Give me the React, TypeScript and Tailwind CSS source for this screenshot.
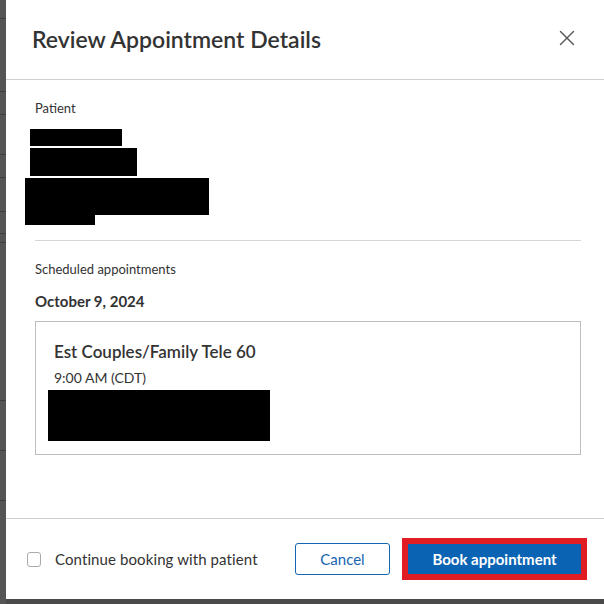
import { X } from "lucide-react";

const font = { fontFamily: "Lato, 'Noto Sans', sans-serif" };

function Redacted({ className }: { className: string }) {
  return <div className={`bg-black ${className}`} />;
}

export default function App() {
  return (
    <div className="w-[604px] h-[604px] bg-[#4a4a4a] flex overflow-hidden" style={font}>
      <div className="w-[6px] h-full bg-[#555] flex flex-col">
        <div className="h-[19px] border-b border-[#3f3f3f]" />
        <div className="h-[73px] border-b border-[#3f3f3f]" />
        <div className="h-[23px] border-b border-[#3f3f3f]" />
        <div className="h-[40px] border-b border-[#3f3f3f]" />
        <div className="h-[23px] border-b border-[#3f3f3f]" />
        <div className="h-[34px] border-b border-[#3f3f3f]" />
        <div className="h-[22px] border-b border-[#3f3f3f]" />
        <div className="h-[9px] border-b border-[#3f3f3f]" />
        <div className="h-[158px] border-b border-[#3f3f3f]" />
        <div className="h-[50px] border-b border-[#3f3f3f]" />
        <div className="h-[50px] border-b border-[#3f3f3f]" />
      </div>
      <div className="w-[598px] h-[599px] bg-white flex flex-col">
        <div className="h-[80px] border-b border-[#cfcfcf] flex items-center justify-between pl-[26px] pr-[24px] shrink-0">
          <h1 className="text-[23px] font-semibold text-[#333] -mt-[1px]">Review Appointment Details</h1>
          <X className="w-[26px] h-[26px] text-[#555] -mt-[3px]" strokeWidth={1.3} />
        </div>
        <div className="flex-1 pl-[29px] pr-[23px]">
          <div className="pt-[20px] text-[13px] text-[#333] leading-[17px]">Patient</div>
          <div className="mt-[12px] flex flex-col">
            <Redacted className="w-[92px] h-[17px] -ml-[5px]" />
            <Redacted className="w-[107px] h-[28px] mt-[2px] -ml-[5px]" />
            <div className="mt-[2px] -ml-[10px] flex flex-col">
              <Redacted className="w-[184px] h-[37px]" />
              <Redacted className="w-[70px] h-[10px]" />
            </div>
          </div>
          <div className="mt-[15px] border-t border-[#d6d6d6]" />
          <div className="mt-[20px] text-[13px] text-[#333] leading-[17px]">Scheduled appointments</div>
          <div className="mt-[13px] text-[15px] font-bold text-[#333] leading-[20px]">October 9, 2024</div>
          <div className="mt-[10px] border border-[#bdbdbd] h-[134px] px-[18px] pt-[19px]">
            <div className="text-[17px] font-semibold text-[#333] leading-[22px]">Est Couples/Family Tele 60</div>
            <div className="mt-[6px] text-[14px] text-[#333] leading-[18px]">9:00 AM (CDT)</div>
            <Redacted className="w-[222px] h-[51px] -ml-[6px] mt-[3px]" />
          </div>
        </div>
        <div className="h-[81px] border-t border-[#cfcfcf] flex items-center pl-[21px] pr-[17px] shrink-0">
          <label className="flex items-center gap-[14px] flex-1">
            <span className="w-[14px] h-[15px] border border-[#aaa] rounded-[3px] bg-white" />
            <span className="text-[15px] text-[#333] tracking-[0.1px]">Continue booking with patient</span>
          </label>
          <button className="w-[95px] h-[32px] border border-[#1565b0] rounded-[3px] text-[15px] text-[#1565b0] bg-white">
            Cancel
          </button>
          <div className="ml-[12px] border-[6px] border-[#e11d24] p-0">
            <button className="w-[173px] h-[30px] bg-[#0b64b3] text-white text-[15px] font-bold block">
              Book appointment
            </button>
          </div>
        </div>
      </div>
    </div>
  );
}
